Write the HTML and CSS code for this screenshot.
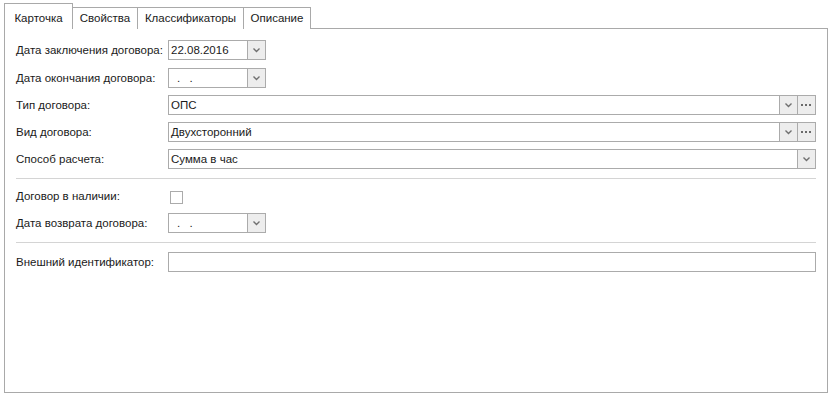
FILE: index.html
```html
<!DOCTYPE html>
<html lang="ru">
<head>
    <meta charset="UTF-8">
    <title>Договор</title>
    <link rel="stylesheet" href="styles.css">
</head>
<body>
    <div class="tabs">
        <div class="tab active t1">Карточка</div>
        <div class="tab t2">Свойства</div>
        <div class="tab t3">Классификаторы</div>
        <div class="tab t4">Описание</div>
    </div>
    <div class="panel">
        <div class="row">
            <span class="label">Дата заключения договора:</span>
            <div class="field date">
                <span class="value">22.08.2016</span>
                <span class="btn drop"><svg width="7" height="5" viewBox="0 0 7 5"><path d="M0.5 0.5 L3.5 3.5 L6.5 0.5" fill="none" stroke="#707070" stroke-width="1.4"/></svg></span>
            </div>
        </div>
        <div class="row second">
            <span class="label">Дата окончания договора:</span>
            <div class="field date">
                <span class="value dots">.&nbsp;&nbsp;.</span>
                <span class="btn drop"><svg width="7" height="5" viewBox="0 0 7 5"><path d="M0.5 0.5 L3.5 3.5 L6.5 0.5" fill="none" stroke="#707070" stroke-width="1.4"/></svg></span>
            </div>
        </div>
        <div class="row">
            <span class="label">Тип договора:</span>
            <div class="field wide">
                <span class="value">ОПС</span>
                <span class="btn drop"><svg width="7" height="5" viewBox="0 0 7 5"><path d="M0.5 0.5 L3.5 3.5 L6.5 0.5" fill="none" stroke="#707070" stroke-width="1.4"/></svg></span>
                <span class="btn more"><svg width="11" height="2" viewBox="0 0 11 2"><rect x="0" y="0" width="2" height="2" fill="#6a6a6a"/><rect x="4" y="0" width="2" height="2" fill="#6a6a6a"/><rect x="8" y="0" width="2" height="2" fill="#6a6a6a"/></svg></span>
            </div>
        </div>
        <div class="row">
            <span class="label">Вид договора:</span>
            <div class="field wide">
                <span class="value">Двухсторонний</span>
                <span class="btn drop"><svg width="7" height="5" viewBox="0 0 7 5"><path d="M0.5 0.5 L3.5 3.5 L6.5 0.5" fill="none" stroke="#707070" stroke-width="1.4"/></svg></span>
                <span class="btn more"><svg width="11" height="2" viewBox="0 0 11 2"><rect x="0" y="0" width="2" height="2" fill="#6a6a6a"/><rect x="4" y="0" width="2" height="2" fill="#6a6a6a"/><rect x="8" y="0" width="2" height="2" fill="#6a6a6a"/></svg></span>
            </div>
        </div>
        <div class="row">
            <span class="label">Способ расчета:</span>
            <div class="field wide">
                <span class="value">Сумма в час</span>
                <span class="btn drop"><svg width="7" height="5" viewBox="0 0 7 5"><path d="M0.5 0.5 L3.5 3.5 L6.5 0.5" fill="none" stroke="#707070" stroke-width="1.4"/></svg></span>
            </div>
        </div>
        <div class="sep top"></div>
        <div class="row">
            <span class="label">Договор в наличии:</span>
            <span class="check"></span>
        </div>
        <div class="row">
            <span class="label">Дата возврата договора:</span>
            <div class="field date">
                <span class="value dots">.&nbsp;&nbsp;.</span>
                <span class="btn drop"><svg width="7" height="5" viewBox="0 0 7 5"><path d="M0.5 0.5 L3.5 3.5 L6.5 0.5" fill="none" stroke="#707070" stroke-width="1.4"/></svg></span>
            </div>
        </div>
        <div class="sep"></div>
        <div class="row">
            <span class="label">Внешний идентификатор:</span>
            <div class="field wide">
                <span class="value"></span>
            </div>
        </div>
    </div>
</body>
</html>
```

FILE: styles.css
```css
body{
    margin: 0;
    font-family: "Liberation Sans", Arial, sans-serif;
    font-size: 11.5px;
    color: #1a1a1a;
    background: #fff;
}
.tabs{
    display: flex;
    align-items: flex-end;
    margin-left: 4px;
    padding-top: 3px;
    height: 26px;
    position: relative;
    z-index: 1;
}
.tab{
    height: 22px;
    line-height: 20px;
    border: 1px solid #a9a9a9;
    border-bottom: none;
    border-left: none;
    background: #fff;
    white-space: nowrap;
    box-sizing: border-box;
    text-align: center;
}
.tab.active{
    height: 26px;
    line-height: 28px;
    border-left: 1px solid #a9a9a9;
}
.t1{ width: 69px; }
.t2{ width: 65px; }
.t3{ width: 106px; }
.t4{ width: 67px; }
.panel{
    margin-left: 4px;
    width: 824px;
    height: 365px;
    border: 1px solid #a9a9a9;
    box-sizing: border-box;
    padding: 11px 11px 0 11px;
    margin-top: -1px;
    display: flex;
    flex-direction: column;
    gap: 7px;
}
.row{
    display: flex;
    align-items: center;
    height: 20px;
}
.row.second{
    margin-top: 1px;
}
.label{
    width: 152px;
    flex: none;
    white-space: nowrap;
}
.field{
    display: flex;
    height: 20px;
    border: 1px solid #ababab;
    box-sizing: border-box;
    background: #fff;
}
.field.date{
    width: 98px;
}
.field.wide{
    width: 648px;
}
.value{
    flex: 1;
    line-height: 18px;
    padding-left: 2px;
}
.dots{
    padding-left: 8px;
    letter-spacing: 1px;
}
.btn{
    width: 17px;
    flex: none;
    background: #ededed;
    border-left: 1px solid #ababab;
    display: flex;
    align-items: center;
    justify-content: center;
}
.sep{
    height: 1px;
    background: #d4d4d4;
    margin: 2px 0 2px 0;
}
.sep.top{
    margin-bottom: 0;
}
.check{
    width: 11px;
    height: 11px;
    border: 1px solid #ababab;
    margin-left: 2px;
    margin-top: 2px;
}
```
